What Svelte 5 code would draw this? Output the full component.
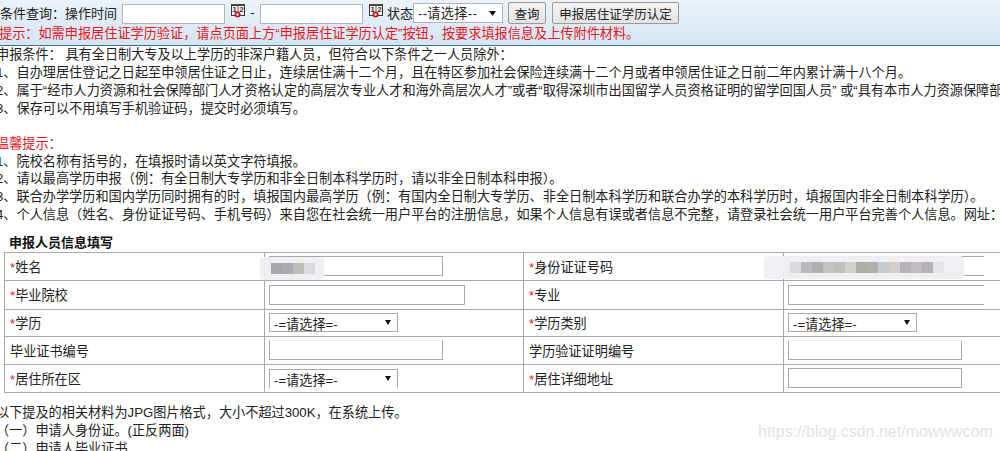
<script>
  // Residence-permit degree filing page, cropped view. Text runs off both
  // page edges on purpose, the wrapper clips it.
  const blurName = ['#a8a8a8', '#acacac', '#bebeb8', '#dadbdf'];
  const blurId = ['#d9d9dc', '#b9b9bb', '#b0b0ae', '#c6c2c0', '#c0bebc', '#d2d0cc', '#b0aeaa', '#b2b0ac', '#c8ccd0', '#d2cfcc', '#b8b2b8', '#c0bcc2', '#b4b2b6', '#e4e5e8'];
</script>

{#snippet calendar()}
  <svg class="cal" width="15" height="14" viewBox="0 0 15 14" aria-hidden="true">
    <rect x="0.5" y="0.5" width="13" height="11" fill="#f4f2ee" stroke="#3e3830" />
    <rect x="0" y="0" width="14" height="2" fill="#4a4238" />
    <line x1="7" y1="1" x2="7" y2="11" stroke="#6a6258" />
    <text x="1.5" y="8" class="cal-num">1</text>
    <text x="8.5" y="8" class="cal-num">2</text>
    <circle cx="6.5" cy="10.5" r="3" fill="#c8141c" />
    <circle cx="6.5" cy="10.5" r="1.2" fill="#fff" />
  </svg>
{/snippet}

<div class="page">
  <header class="head">
    <div class="query">
      <span class="q-label">条件查询：操作时间</span>
      <input class="date" type="text" />
      {@render calendar()}
      <span class="dash">-</span>
      <input class="date" type="text" />
      {@render calendar()}
      <span class="q-state">状态</span>
      <select class="state"><option>--请选择--</option></select>
      <button type="button" class="btn btn-query">查询</button>
      <button type="button" class="btn btn-apply">申报居住证学历认定</button>
    </div>
    <p class="notice">提示：如需申报居住证学历验证，请点页面上方“申报居住证学历认定”按钮，按要求填报信息及上传附件材料。</p>
  </header>

  <section class="text">
    <p>申报条件： 具有全日制大专及以上学历的非深户籍人员，但符合以下条件之一人员除外：</p>
    <p>1、自办理居住登记之日起至申领居住证之日止，连续居住满十二个月，且在特区参加社会保险连续满十二个月或者申领居住证之日前二年内累计满十八个月。</p>
    <p>2、属于“经市人力资源和社会保障部门人才资格认定的高层次专业人才和海外高层次人才”或者“取得深圳市出国留学人员资格证明的留学回国人员” 或“具有本市人力资源保障部门</p>
    <p>3、保存可以不用填写手机验证码，提交时必须填写。</p>
  </section>

  <section class="text tips">
    <p class="tips-title">温馨提示：</p>
    <p>1、院校名称有括号的，在填报时请以英文字符填报。</p>
    <p>2、请以最高学历申报（例：有全日制大专学历和非全日制本科学历时，请以非全日制本科申报）。</p>
    <p>3、联合办学学历和国内学历同时拥有的时，填报国内最高学历（例：有国内全日制大专学历、非全日制本科学历和联合办学的本科学历时，填报国内非全日制本科学历）。</p>
    <p>4、个人信息（姓名、身份证证号码、手机号码）来自您在社会统一用户平台的注册信息，如果个人信息有误或者信息不完整，请登录社会统一用户平台完善个人信息。网址：</p>
  </section>

  <h3 class="form-title">申报人员信息填写</h3>
  <table class="form">
    <colgroup><col class="c1" /><col class="c2" /><col class="c1" /><col class="c2" /></colgroup>
    <tbody>
      <tr class="r28">
        <td><i>*</i>姓名</td>
        <td><input class="w-s" type="text" /></td>
        <td><i>*</i>身份证证号码</td>
        <td><input class="w-l cut" type="text" /></td>
      </tr>
      <tr class="r29">
        <td><i>*</i>毕业院校</td>
        <td><input class="w-l" type="text" /></td>
        <td><i>*</i>专业</td>
        <td><input class="w-l cut" type="text" /></td>
      </tr>
      <tr class="r27">
        <td><i>*</i>学历</td>
        <td><select><option>-=请选择=-</option></select></td>
        <td><i>*</i>学历类别</td>
        <td><select><option>-=请选择=-</option></select></td>
      </tr>
      <tr class="r28">
        <td>毕业证书编号</td>
        <td><input class="w-s open-top" type="text" /></td>
        <td>学历验证证明编号</td>
        <td><input class="w-s open-top" type="text" /></td>
      </tr>
      <tr class="r28">
        <td><i>*</i>居住所在区</td>
        <td><select class="open-bottom"><option>-=请选择=-</option></select></td>
        <td><i>*</i>居住详细地址</td>
        <td><input class="w-s" type="text" /></td>
      </tr>
    </tbody>
  </table>

  <section class="text after">
    <p>以下提及的相关材料为JPG图片格式，大小不超过300K，在系统上传。</p>
    <p>（一）申请人身份证。(正反两面)</p>
    <p>（二）申请人毕业证书</p>
  </section>

  <!-- redacted values and the image watermark sit over the page -->
  <div class="redact redact-name">
    {#each blurName as c}<span style:background={c}></span>{/each}
  </div>
  <div class="redact redact-id">
    {#each blurId as c}<span style:background={c}></span>{/each}
  </div>
  <div class="mark">https://blog.csdn.net/mowwwcom</div>
</div>

<style>
  :global(body) {
    margin: 0;
    background: #fff;
  }

  .page {
    position: relative;
    width: 1000px;
    height: 451px;
    overflow: hidden;
    font-family: "Liberation Sans", "Noto Sans CJK SC", sans-serif;
    font-size: 13.17px;
    color: #222;
  }

  .head {
    box-sizing: border-box;
    height: 46px;
    background: linear-gradient(#ecf3f9, #d3e5f2);
    border-bottom: 1px solid #3f6f9c;
  }

  .query {
    display: flex;
    align-items: center;
    height: 25px;
    white-space: nowrap;
  }

  .q-label {
    width: 122px;
    font-size: 13px;
  }

  .date {
    box-sizing: border-box;
    width: 103px;
    height: 20px;
    margin: 3px 0 0;
    border: 1px solid #b4b4b4;
    background: #fff;
  }

  .cal {
    margin: -3px 0 0 6px;
    flex: none;
  }

  .cal-num {
    font-size: 7.5px;
    font-weight: 700;
    fill: #2a2a50;
  }

  .dash {
    width: 15px;
    margin-left: -1px;
    text-align: center;
  }

  .q-state {
    margin-left: 3px;
    width: 26px;
    font-size: 13px;
  }

  .state {
    box-sizing: border-box;
    width: 90px;
    height: 20px;
    margin: 1px 0 0;
    padding: 0 0 0 4px;
    appearance: none;
    font: inherit;
    letter-spacing: 0.3px;
    color: #222;
    background: #fff url("data:image/svg+xml,%3Csvg xmlns='http://www.w3.org/2000/svg' width='7' height='5'%3E%3Cpath d='M0 0h7L3.5 5z' fill='%23111'/%3E%3C/svg%3E") no-repeat right 6px center;
    border: 1px solid #b4b4b4;
    border-radius: 0;
  }

  .btn {
    box-sizing: border-box;
    height: 22px;
    margin: 1px 0 0;
    padding: 0;
    font: inherit;
    font-size: 12.5px;
    color: #222;
    background: linear-gradient(#f4f4f4, #e2e2e2);
    border: 1px solid #9a9a9a;
    border-radius: 2px;
  }

  .btn-query {
    width: 38px;
    margin-left: 5px;
  }

  .btn-apply {
    width: 127px;
    margin-left: 6px;
  }

  .notice {
    margin: 0 0 0 -1px;
    line-height: 18px;
    color: #e8141e;
    white-space: nowrap;
  }

  .text {
    margin-left: -4px;
    white-space: nowrap;
  }

  .text p {
    margin: 0;
    line-height: 18px;
  }

  .tips {
    margin-top: 17px;
  }

  .tips p {
    line-height: 17.7px;
  }

  .text .tips-title {
    color: #e8141e;
  }

  .form-title {
    margin: 0 0 0 9px;
    font-size: 13px;
    line-height: 19px;
    padding-top: 9px;
    font-weight: 700;
    color: #111;
  }

  .form {
    width: 1038px;
    margin-left: 4px;
    table-layout: fixed;
    border-collapse: collapse;
  }

  .c1 {
    width: 260px;
  }

  .c2 {
    width: 259px;
  }

  .form td {
    padding: 0 0 0 5px;
    border: 1px solid #a8a8b0;
    vertical-align: middle;
    white-space: nowrap;
  }

  .form td:nth-child(even) {
    padding-left: 4px;
  }

  .r27 {
    height: 27px;
  }

  .r28 {
    height: 28px;
  }

  .r29 {
    height: 29px;
  }

  .form i {
    font-style: normal;
    color: #e8141e;
  }

  .form input {
    display: block;
    box-sizing: border-box;
    height: 20px;
    margin: 0;
    padding: 0;
    background: #fff;
    border: 1px solid #a8a8a8;
  }

  .w-s {
    width: 174px;
  }

  .w-l {
    width: 196px;
  }

  .form input.cut {
    border-right: none;
  }

  .form input.open-top {
    border-top-color: #eee;
  }

  .form select {
    display: block;
    box-sizing: border-box;
    width: 129px;
    height: 19px;
    margin: 0;
    padding: 3px 0 0 4px;
    appearance: none;
    font: inherit;
    color: #222;
    background: #fff url("data:image/svg+xml,%3Csvg xmlns='http://www.w3.org/2000/svg' width='6' height='5'%3E%3Cpath d='M0 0h6L3 5z' fill='%23111'/%3E%3C/svg%3E") no-repeat right 6px center;
    border: 1px solid #a8a8a8;
    border-radius: 0;
  }

  .form select.open-bottom {
    border-bottom-color: #fff;
  }

  .after {
    margin-top: 11px;
  }

  .redact {
    position: absolute;
    display: flex;
    align-items: center;
    background: rgba(238, 239, 242, 0.95);
    border-radius: 4px;
  }

  .redact span {
    display: block;
    width: 11px;
    height: 11px;
  }

  .redact-name {
    left: 260px;
    top: 257px;
    width: 64px;
    height: 23px;
    padding-left: 11px;
    box-sizing: border-box;
  }

  .redact-id {
    left: 764px;
    top: 256px;
    width: 200px;
    height: 23px;
    padding-left: 26px;
    box-sizing: border-box;
  }

  .mark {
    position: absolute;
    left: 758px;
    top: 423px;
    font-size: 16px;
    line-height: 18px;
    color: #e2e2e2;
    white-space: nowrap;
  }
</style>
